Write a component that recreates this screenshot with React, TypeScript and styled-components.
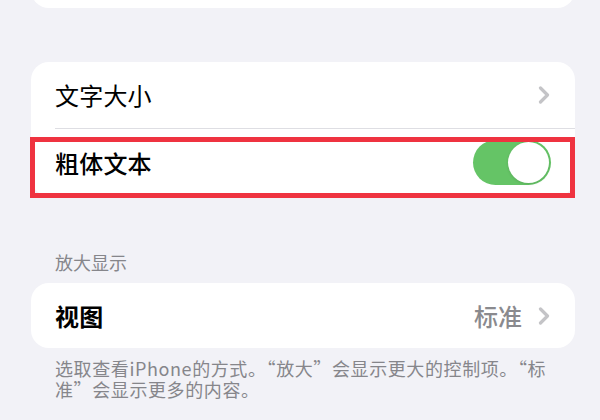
import React from "react";
import styled, { createGlobalStyle } from "styled-components";

const GlobalStyle = createGlobalStyle`
  html, body {
    margin: 0;
    padding: 0;
    background: #f2f2f7;
  }
  body {
    font-family: "Noto Sans CJK SC", "Noto Sans", "Liberation Sans", sans-serif;
    -webkit-font-smoothing: antialiased;
  }
`;

const Page = styled.div`
  width: 600px;
  height: 420px;
  overflow: hidden;
  box-sizing: border-box;
  padding: 0 25px 0 31px;
  display: flex;
  flex-direction: column;
  background: #f2f2f7;
`;

const Card = styled.div<{ $top?: number }>`
  background: #ffffff;
  border-radius: 18px;
  display: flex;
  flex-direction: column;
  margin-top: ${(p) => (p.$top !== undefined ? p.$top : 0)}px;
`;

const Row = styled.div<{ $height: number }>`
  position: relative;
  height: ${(p) => p.$height}px;
  display: flex;
  align-items: center;
  justify-content: space-between;
  padding: 0 25px 0 24px;
`;

const Label = styled.span<{ $weight?: number }>`
  font-size: 24px;
  line-height: 30px;
  color: #000000;
  font-weight: ${(p) => p.$weight ?? 400};
  letter-spacing: 0.2px;
`;

const Trail = styled.div`
  display: flex;
  align-items: center;
  gap: 16px;
`;

const Value = styled.span`
  font-size: 24px;
  line-height: 30px;
  color: #8a8a8e;
  font-weight: 500;
`;

const Separator = styled.div`
  height: 1px;
  margin-left: 24px;
  background: #dedee3;
`;

const Highlight = styled.div`
  position: absolute;
  left: -1px;
  right: 0;
  top: 8px;
  bottom: -2px;
  border: 5px solid #ef3340;
  pointer-events: none;
`;

const Toggle = styled.div<{ $on: boolean }>`
  width: 78px;
  height: 45px;
  border-radius: 23px;
  background: ${(p) => (p.$on ? "#65c466" : "#e9e9ea")};
  display: flex;
  align-items: center;
  justify-content: ${(p) => (p.$on ? "flex-end" : "flex-start")};
  padding: 0 2px;
  box-sizing: border-box;
  margin-right: -1px;
`;

const Knob = styled.div`
  width: 41px;
  height: 41px;
  border-radius: 50%;
  background: #ffffff;
  box-shadow: 0 1px 3px rgba(0, 0, 0, 0.12);
`;

const SectionHeader = styled.div`
  margin: 54px 0 9px 24px;
  font-size: 18px;
  line-height: 24px;
  color: #86868b;
`;

const Footer = styled.div`
  margin: 10px 0 0 24px;
  display: flex;
  flex-direction: column;
  font-size: 18px;
  letter-spacing: 0.6px;
  color: #86868b;
  white-space: nowrap;
`;

const FooterLine = styled.div`
  height: 21px;
  line-height: 21px;
`;

const Chevron = () => (
  <svg width="12" height="18" viewBox="0 0 12 18" fill="none">
    <path
      d="M2.5 2 L9.5 9 L2.5 16"
      stroke="#c4c4c7"
      strokeWidth="3.2"
      strokeLinecap="round"
      strokeLinejoin="round"
    />
  </svg>
);

export default function App() {
  return (
    <>
      <GlobalStyle />
      <Page>
        <Card $top={-52}>
          <Row $height={60} />
        </Card>

        <Card $top={54}>
          <Row $height={66}>
            <Label $weight={400}>文字大小</Label>
            <Chevron />
          </Row>
          <Separator />
          <Row $height={67}>
            <Label $weight={500}>粗体文本</Label>
            <Toggle $on={true}>
              <Knob />
            </Toggle>
            <Highlight />
          </Row>
        </Card>

        <SectionHeader>放大显示</SectionHeader>

        <Card>
          <Row $height={65}>
            <Label $weight={700}>视图</Label>
            <Trail>
              <Value>标准</Value>
              <Chevron />
            </Trail>
          </Row>
        </Card>

        <Footer>
          <FooterLine>选取查看iPhone的方式。“放大”会显示更大的控制项。“标</FooterLine>
          <FooterLine>准”会显示更多的内容。</FooterLine>
        </Footer>
      </Page>
    </>
  );
}
